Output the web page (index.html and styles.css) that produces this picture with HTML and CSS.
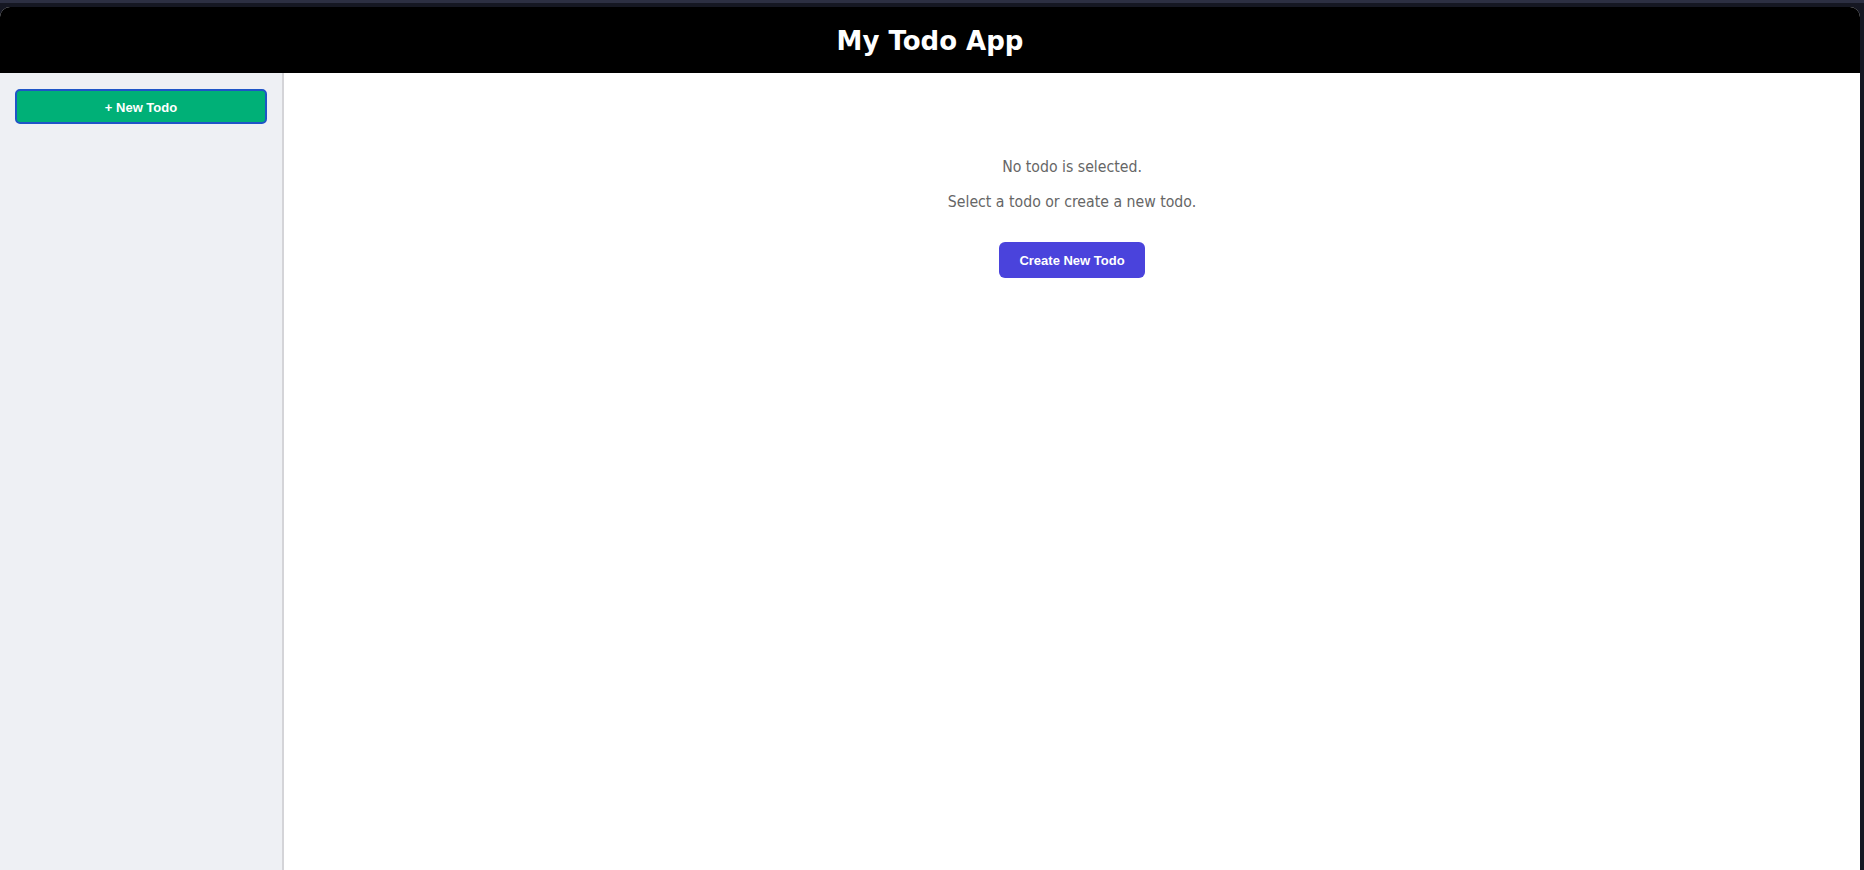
FILE: index.html
```html
<!DOCTYPE html>
<html lang="en">
<head>
<meta charset="utf-8">
<title>My Todo App</title>
<link rel="stylesheet" href="styles.css">
</head>
<body>
<div class="frame">
  <div class="app">
    <header class="header">
      <h1 class="title">My Todo App</h1>
    </header>
    <div class="body">
      <aside class="sidebar">
        <button class="new-btn">+ New Todo</button>
      </aside>
      <main class="main">
        <p class="msg msg-first">No todo is selected.</p>
        <p class="msg">Select a todo or create a new todo.</p>
        <button class="create-btn">Create New Todo</button>
      </main>
    </div>
  </div>
</div>
</body>
</html>
```
FILE: styles.css
```css
html, body {
  margin: 0;
  padding: 0;
  height: 100%;
}
body {
  background: #151722;
  overflow: hidden;
}
.frame {
  height: 100%;
  box-sizing: border-box;
  padding: 4px 4px 0 0;
  border-top: 3px solid #2c2f42;
  background: #151722;
}
.app {
  height: 100%;
  display: flex;
  flex-direction: column;
  border-radius: 10px 10px 0 0;
  overflow: hidden;
  background: #fff;
}
.header {
  height: 66px;
  flex: 0 0 66px;
  background: #000;
  display: flex;
  align-items: center;
  justify-content: center;
}
.title {
  margin: 0;
  color: #fff;
  font-family: "DejaVu Sans", sans-serif;
  font-weight: bold;
  font-size: 26px;
  padding-top: 2px;
}
.body {
  flex: 1;
  display: flex;
}
.sidebar {
  width: 252px;
  flex: 0 0 252px;
  background: #eef0f4;
  border-right: 2px solid #d4d4d8;
  padding: 16px 15px 0;
  box-sizing: content-box;
}
.new-btn {
  display: block;
  width: 252px;
  height: 35px;
  box-sizing: border-box;
  background: #00b077;
  border: 2px solid #1f55c7;
  border-radius: 5px;
  color: #fff;
  font-family: "Liberation Sans", Arial, sans-serif;
  font-weight: bold;
  font-size: 13px;
  padding-top: 2px;
  cursor: pointer;
}
.main {
  flex: 1;
  display: flex;
  flex-direction: column;
  align-items: center;
  padding-top: 84px;
}
.msg {
  margin: 0 0 15px;
  line-height: 20px;
  color: #666;
  font-family: "DejaVu Sans Condensed", "DejaVu Sans", sans-serif;
  font-size: 15.7px;
}
.create-btn {
  margin-top: 15px;
  width: 146px;
  height: 36px;
  background: #4a43dc;
  border: none;
  border-radius: 6px;
  color: #fff;
  font-family: "Liberation Sans", Arial, sans-serif;
  font-weight: bold;
  font-size: 13px;
  cursor: pointer;
}
```
